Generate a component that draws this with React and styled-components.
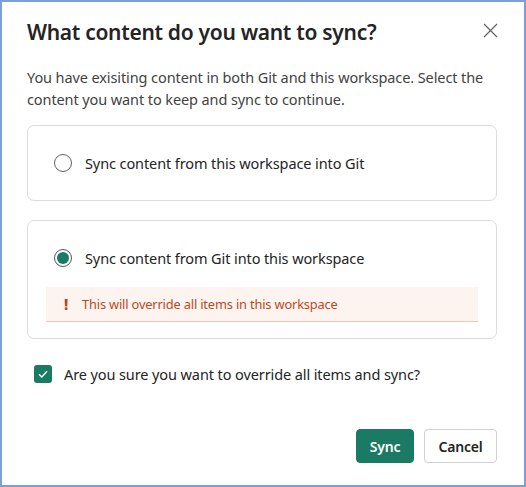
import React from "react";
import styled, { createGlobalStyle } from "styled-components";

const Global = createGlobalStyle`
  html, body { margin: 0; padding: 0; background: #ffffff; }
  * { box-sizing: border-box; }
  body { font-family: "Noto Sans", "Open Sans", Arial, sans-serif; }
`;

const Frame = styled.div`
  width: 526px;
  height: 487px;
  border: 2px solid #7d9fd8;
  background: #ffffff;
  padding: 14px 27px 0 25px;
  display: flex;
  flex-direction: column;
`;

const Header = styled.div`
  display: flex;
  align-items: flex-start;
  justify-content: space-between;
  height: 32px;
`;

const Title = styled.h2`
  margin: 0;
  font-size: 21px;
  line-height: 32px;
  font-weight: 600;
  color: #242424;
  letter-spacing: -0.3px;
`;

const Close = styled.button`
  border: none;
  background: none;
  padding: 0;
  margin-top: 6px;
  width: 16px;
  height: 16px;
  display: flex;
  align-items: center;
  justify-content: center;
  margin-right: -1px;
`;

const Desc = styled.p`
  margin: 18px 0 0;
  font-size: 14.5px;
  line-height: 22px;
  color: #424242;
  letter-spacing: -0.1px;
`;

const Options = styled.div`
  margin-top: 15px;
  display: flex;
  flex-direction: column;
  gap: 19px;
`;

const Card = styled.div`
  border: 1px solid #dcdcdc;
  border-radius: 7px;
  padding: ${(p) => (p.$expanded ? "27px 18px 16px 18px" : "27px 18px 27px 18px")};
  display: flex;
  flex-direction: column;
`;

const OptionRow = styled.label`
  display: flex;
  align-items: center;
  gap: 13px;
  padding-left: 8px;
  font-size: 14.5px;
  color: #242424;
  height: 20px;
  letter-spacing: -0.1px;
`;

const Radio = styled.span`
  width: 18px;
  height: 18px;
  border-radius: 50%;
  border: 1.5px solid ${(p) => (p.$checked ? "#555" : "#616161")};
  display: flex;
  align-items: center;
  justify-content: center;
  flex: none;
  &::after {
    content: "";
    width: 12px;
    height: 12px;
    border-radius: 50%;
    background: ${(p) => (p.$checked ? "#1b7a63" : "transparent")};
  }
`;

const Warning = styled.div`
  margin-top: 19px;
  height: 35px;
  background: #fdf3ef;
  border-bottom: 1px solid #f2c6b2;
  display: flex;
  align-items: center;
  padding-left: 17px;
  gap: 13px;
  color: #bb4a22;
  font-size: 12.8px;
  letter-spacing: -0.15px;
`;

const Bang = styled.span`
  font-weight: 800;
  font-size: 15px;
  color: #c4401a;
  width: 6px;
  text-align: center;
`;

const CheckRow = styled.label`
  margin-top: 25px;
  margin-left: 7px;
  display: flex;
  align-items: center;
  gap: 12px;
  font-size: 14.5px;
  color: #242424;
  letter-spacing: -0.1px;
`;

const Box = styled.span`
  width: 18px;
  height: 18px;
  border-radius: 3px;
  background: #1b7a63;
  display: flex;
  align-items: center;
  justify-content: center;
  flex: none;
`;

const Footer = styled.div`
  margin-top: auto;
  margin-bottom: 22px;
  display: flex;
  justify-content: flex-end;
  gap: 10px;
`;

const Button = styled.button`
  height: 34px;
  min-width: ${(p) => (p.$primary ? "58px" : "73px")};
  padding: 0 12px;
  border-radius: 4px;
  font-family: inherit;
  font-size: 14px;
  font-weight: 600;
  letter-spacing: -0.2px;
  border: 1px solid ${(p) => (p.$primary ? "#1b7a63" : "#d1d1d1")};
  background: ${(p) => (p.$primary ? "#1b7a63" : "#ffffff")};
  color: ${(p) => (p.$primary ? "#ffffff" : "#242424")};
`;

export default function App() {
  return (
    <>
      <Global />
      <Frame>
        <Header>
          <Title>What content do you want to sync?</Title>
          <Close aria-label="Close">
            <svg width="15" height="15" viewBox="0 0 15 15">
              <path d="M1 1 L14 14 M14 1 L1 14" stroke="#616161" strokeWidth="1.2" fill="none" />
            </svg>
          </Close>
        </Header>
        <Desc>
          You have exisiting content in both Git and this workspace. Select the content you want to keep and sync to continue.
        </Desc>
        <Options>
          <Card>
            <OptionRow>
              <Radio />
              Sync content from this workspace into Git
            </OptionRow>
          </Card>
          <Card $expanded>
            <OptionRow>
              <Radio $checked />
              Sync content from Git into this workspace
            </OptionRow>
            <Warning>
              <Bang>!</Bang>
              This will override all items in this workspace
            </Warning>
          </Card>
        </Options>
        <CheckRow>
          <Box>
            <svg width="12" height="12" viewBox="0 0 12 12">
              <path d="M2 6.3 L4.8 9 L10 3.2" stroke="#ffffff" strokeWidth="1.3" fill="none" />
            </svg>
          </Box>
          Are you sure you want to override all items and sync?
        </CheckRow>
        <Footer>
          <Button $primary>Sync</Button>
          <Button>Cancel</Button>
        </Footer>
      </Frame>
    </>
  );
}
